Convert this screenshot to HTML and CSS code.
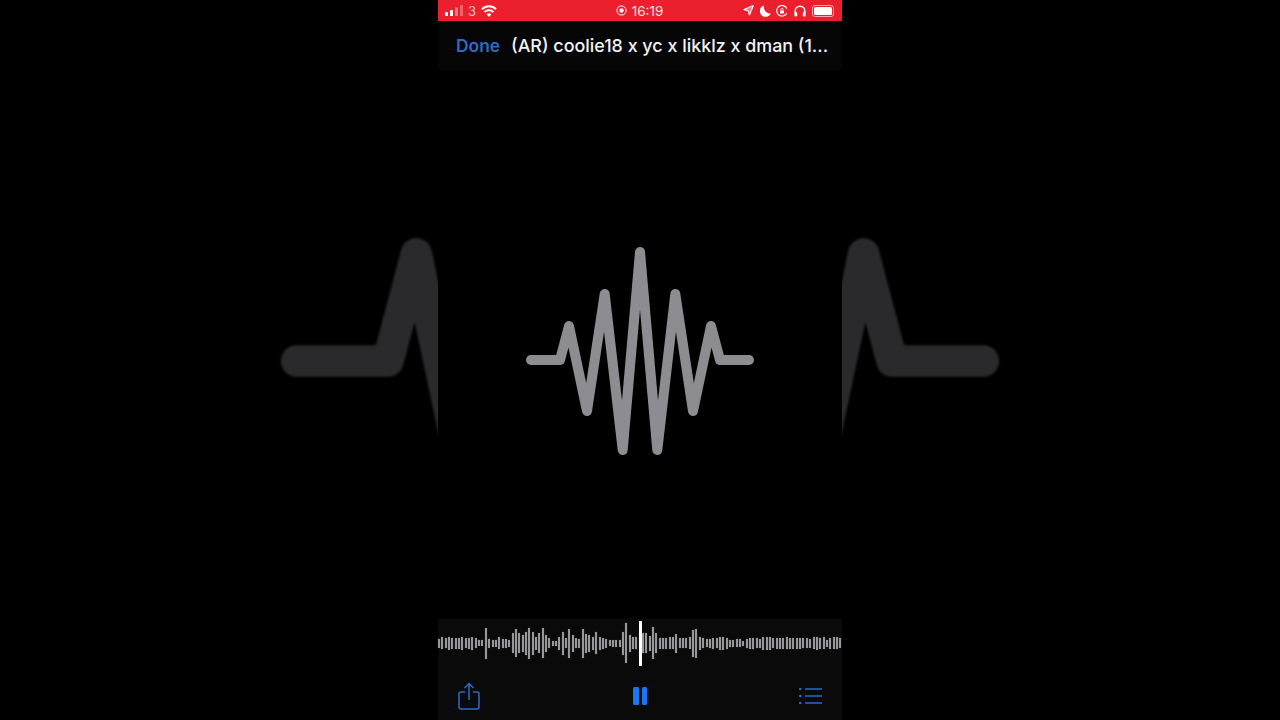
FILE: index.html
```html
<!DOCTYPE html>
<html lang="en">
<head>
    <meta charset="UTF-8">
    <title>Voice Memo</title>
    <link rel="stylesheet" href="styles.css">
</head>
<body>
    <!-- enlarged pulse behind the phone, only the sides show -->
    <svg class="backdrop" viewBox="-640 -360 1280 720">
        <defs>
            <polyline id="pulse" points="-109,0 -80,0 -71,-34 -53,51 -35.3,-66 -17.3,90 0,-108 17.3,90 35.3,-66 53,51 71,-34 80,0 109,0" />
        </defs>
        <use href="#pulse" transform="translate(0 1) scale(3.15)" />
    </svg>

    <div class="phone">
        <div class="status-bar">
            <div class="status-left">
                <svg class="signal" width="18" height="11" viewBox="0 0 18 11">
                    <rect x="0" y="7" width="3" height="4" rx="0.5" fill="#fff" />
                    <rect x="5" y="5" width="3" height="6" rx="0.5" fill="#fff" />
                    <rect x="10" y="2.5" width="3" height="8.5" rx="0.5" fill="#f8838b" />
                    <rect x="15" y="0" width="3" height="11" rx="0.5" fill="#f4636d" />
                </svg>
                <span class="carrier">3</span>
                <svg class="wifi" width="16" height="12" viewBox="0 0 16 12" fill="none" stroke="#fff" stroke-width="2">
                    <path d="M1 4.2a10 10 0 0 1 14 0" />
                    <path d="M3.6 6.9a6.4 6.4 0 0 1 8.8 0" />
                    <path d="M8 12 5.7 9.4a3.3 3.3 0 0 1 4.6 0z" fill="#fff" stroke="none" />
                </svg>
            </div>
            <div class="status-center">
                <svg width="11" height="11" viewBox="0 0 11 11" fill="none">
                    <circle cx="5.5" cy="5.5" r="4.6" stroke="#fff" stroke-width="1" />
                    <circle cx="5.5" cy="5.5" r="2.2" fill="#fff" />
                </svg>
                <span>16:19</span>
            </div>
            <div class="status-right">
                <svg width="11" height="11" viewBox="0 0 11 11">
                    <path d="M10.4 0.6 6.4 10 5.2 5.8 1 4.600z" fill="#fff" fill-opacity="0.4" stroke="#fff" stroke-width="1.1" stroke-linejoin="round" />
                </svg>
                <svg width="11" height="12" viewBox="0 0 11 12">
                    <path d="M4.2 0.4a5.8 5.8 0 1 0 6.6 8.2A6.4 6.4 0 0 1 4.2 0.4z" fill="#fff" />
                </svg>
                <svg width="12" height="12" viewBox="0 0 12 12" fill="none">
                    <path d="M10.6 8.4A5.3 5.3 0 1 1 10.8 3.6" stroke="#fff" stroke-width="1.2" />
                    <rect x="4" y="5.4" width="4" height="3.2" rx="0.6" fill="#fff" />
                    <path d="M4.9 5.4V4.4a1.1 1.1 0 0 1 2.2 0v1" stroke="#fff" stroke-width="0.9" />
                </svg>
                <svg width="12" height="12" viewBox="0 0 12 12" fill="none">
                    <path d="M1.2 8V6a4.8 4.8 0 0 1 9.6 0v2" stroke="#fff" stroke-width="1.5" />
                    <rect x="0.4" y="7" width="2.8" height="4.6" rx="1" fill="#fff" />
                    <rect x="8.8" y="7" width="2.8" height="4.6" rx="1" fill="#fff" />
                </svg>
                <div class="battery"><div class="battery-level"></div></div>
            </div>
        </div>

        <div class="nav-bar">
            <span class="done">Done</span>
            <span class="title">(AR) coolie18 x yc x likklz x dman (1...</span>
        </div>

        <div class="artwork">
            <svg class="artwork-icon" width="240" height="240" viewBox="-120 -120 240 240">
                <use href="#pulse" />
            </svg>
        </div>

        <div class="waveform">
            <i style="height:9px"></i><i style="height:12px"></i><i style="height:10px"></i><i style="height:13px"></i><i style="height:11px"></i><i style="height:11px"></i><i style="height:11px"></i><i style="height:13px"></i><i style="height:10px"></i><i style="height:11px"></i>
            <i style="height:13px"></i><i style="height:10px"></i><i style="height:6px"></i><i style="height:6px"></i><i style="height:31px"></i><i style="height:9px"></i><i style="height:7px"></i><i style="height:7px"></i><i style="height:12px"></i><i style="height:9px"></i>
            <i style="height:9px"></i><i style="height:7px"></i><i style="height:20px"></i><i style="height:28px"></i><i style="height:20px"></i><i style="height:17px"></i><i style="height:23px"></i><i style="height:31px"></i><i style="height:23px"></i><i style="height:13px"></i>
            <i style="height:20px"></i><i style="height:30px"></i><i style="height:17px"></i><i style="height:10px"></i><i style="height:5px"></i><i style="height:5px"></i><i style="height:13px"></i><i style="height:23px"></i><i style="height:10px"></i><i style="height:29px"></i>
            <i style="height:17px"></i><i style="height:10px"></i><i style="height:9px"></i><i style="height:29px"></i><i style="height:19px"></i><i style="height:17px"></i><i style="height:13px"></i><i style="height:22px"></i><i style="height:13px"></i><i style="height:11px"></i>
            <i style="height:9px"></i><i style="height:6px"></i><i style="height:7px"></i><i style="height:7px"></i><i style="height:7px"></i><i style="height:23px"></i><i style="height:40px"></i><i style="height:17px"></i><i style="height:12px"></i><i style="height:12px"></i>
            <i style="height:27px"></i><i style="height:20px"></i><i style="height:20px"></i><i style="height:15px"></i><i style="height:32px"></i><i style="height:20px"></i><i style="height:11px"></i><i style="height:11px"></i><i style="height:11px"></i><i style="height:12px"></i>
            <i style="height:12px"></i><i style="height:19px"></i><i style="height:10px"></i><i style="height:10px"></i><i style="height:10px"></i><i style="height:12px"></i><i style="height:27px"></i><i style="height:29px"></i><i style="height:13px"></i><i style="height:10px"></i>
            <i style="height:8px"></i><i style="height:9px"></i><i style="height:11px"></i><i style="height:10px"></i><i style="height:13px"></i><i style="height:13px"></i><i style="height:11px"></i><i style="height:7px"></i><i style="height:7px"></i><i style="height:8px"></i>
            <i style="height:8px"></i><i style="height:5px"></i><i style="height:9px"></i><i style="height:11px"></i><i style="height:11px"></i><i style="height:10px"></i><i style="height:9px"></i><i style="height:13px"></i><i style="height:13px"></i><i style="height:13px"></i>
            <i style="height:10px"></i><i style="height:11px"></i><i style="height:11px"></i><i style="height:11px"></i><i style="height:12px"></i><i style="height:11px"></i><i style="height:11px"></i><i style="height:11px"></i><i style="height:11px"></i><i style="height:10px"></i>
            <i style="height:10px"></i><i style="height:9px"></i><i style="height:12px"></i><i style="height:13px"></i><i style="height:11px"></i><i style="height:12px"></i><i style="height:7px"></i><i style="height:11px"></i><i style="height:12px"></i><i style="height:12px"></i>
            <i style="height:10px"></i>
            <div class="playhead"></div>
        </div>

        <div class="toolbar">
            <svg class="tool-share" width="22" height="28" viewBox="0 0 22 28" fill="none" stroke="#2a6cc8" stroke-width="1.5">
                <path d="M7 10H3a2 2 0 0 0-2 2v13a2 2 0 0 0 2 2h16a2 2 0 0 0 2-2V12a2 2 0 0 0-2-2h-4" />
                <path d="M11 18V1.5M6.5 6 11 1.5 15.5 6" />
            </svg>
            <div class="tool-pause"><span></span><span></span></div>
            <svg class="tool-list" width="23" height="16" viewBox="0 0 23 16" fill="none" stroke="#2a6cc8" stroke-width="1.3">
                <path d="M6 1H23M6 8H23M6 15H23" />
                <circle cx="1.3" cy="1" r="1.3" fill="#2a6cc8" stroke="none" />
                <circle cx="1.3" cy="8" r="1.3" fill="#2a6cc8" stroke="none" />
                <circle cx="1.3" cy="15" r="1.3" fill="#2a6cc8" stroke="none" />
            </svg>
        </div>
    </div>
</body>
</html>
```

FILE: styles.css
```css
body {
    margin: 0;
    height: 720px;
    overflow: hidden;
    background-color: #000;
    font-family: Inter, "Liberation Sans", sans-serif;
    display: flex;
    justify-content: center;
}

.backdrop {
    position: absolute;
    top: 0;
    left: 0;
    width: 1280px;
    height: 720px;
    fill: none;
    stroke: #2a2a2c;
    stroke-width: 10;
    stroke-linecap: round;
    stroke-linejoin: round;
    filter: blur(1px);
}

.phone {
    position: relative;
    width: 404px;
    height: 720px;
    background-color: #000;
    display: flex;
    flex-direction: column;
}

/* Status bar */
.status-bar {
    height: 21px;
    padding: 0 8px 0 7px;
    background-color: #ec1f2e;
    color: #fff;
    font-size: 13.5px;
    display: grid;
    grid-template-columns: 1fr auto 1fr;
    align-items: center;
}

.status-left,
.status-center,
.status-right {
    display: flex;
    align-items: center;
}

.status-left {
    gap: 5px;
}

.carrier {
    color: #fcc4c8;
    font-size: 13px;
}

.status-center {
    gap: 5px;
    color: #fde3e4;
}

.status-right {
    justify-content: flex-end;
    gap: 5.5px;
}

.battery {
    width: 22px;
    height: 12px;
    margin-left: 1px;
    padding: 1px;
    box-sizing: border-box;
    border: 1px solid #f9a9af;
    border-radius: 3px;
}

.battery-level {
    height: 100%;
    background-color: #fff;
    border-radius: 1.5px;
}

/* Nav */
.nav-bar {
    height: 49px;
    padding-left: 18px;
    background-color: #050505;
    display: flex;
    align-items: center;
    gap: 11px;
    white-space: nowrap;
}

.done {
    color: #2a6cc8;
    font-size: 17.4px;
    font-weight: 600;
}

.title {
    color: #f2f2f2;
    font-size: 17.9px;
    font-weight: 500;
}

/* Artwork */
.artwork {
    flex: 1;
    padding-top: 31px;
    display: flex;
    justify-content: center;
    align-items: center;
}

.artwork-icon {
    fill: none;
    stroke: #8c8c91;
    stroke-width: 10;
    stroke-linecap: round;
    stroke-linejoin: round;
    filter: blur(0.4px);
}

/* Waveform */
.waveform {
    position: relative;
    height: 50px;
    padding-bottom: 2px;
    background-color: #0a0a0a;
    display: flex;
    justify-content: space-between;
    align-items: center;
    box-sizing: border-box;
}

.waveform i {
    display: block;
    width: 2px;
    background-color: #98989c;
    box-shadow: 0 0 1px rgba(145, 145, 149, 0.8);
}

.playhead {
    position: absolute;
    top: 2px;
    left: 201px;
    width: 2.5px;
    height: 45px;
    background-color: #fff;
}

/* Toolbar */
.toolbar {
    height: 51px;
    padding: 3px 20px 0;
    box-sizing: border-box;
    background-color: #0a0a0a;
    display: grid;
    grid-template-columns: 1fr auto 1fr;
    align-items: center;
}

.tool-list {
    justify-self: end;
}

.tool-pause {
    display: flex;
    gap: 3px;
}

.tool-pause span {
    display: block;
    width: 5.5px;
    height: 18px;
    background-color: #1a78ee;
    border-radius: 1.5px;
}
```
